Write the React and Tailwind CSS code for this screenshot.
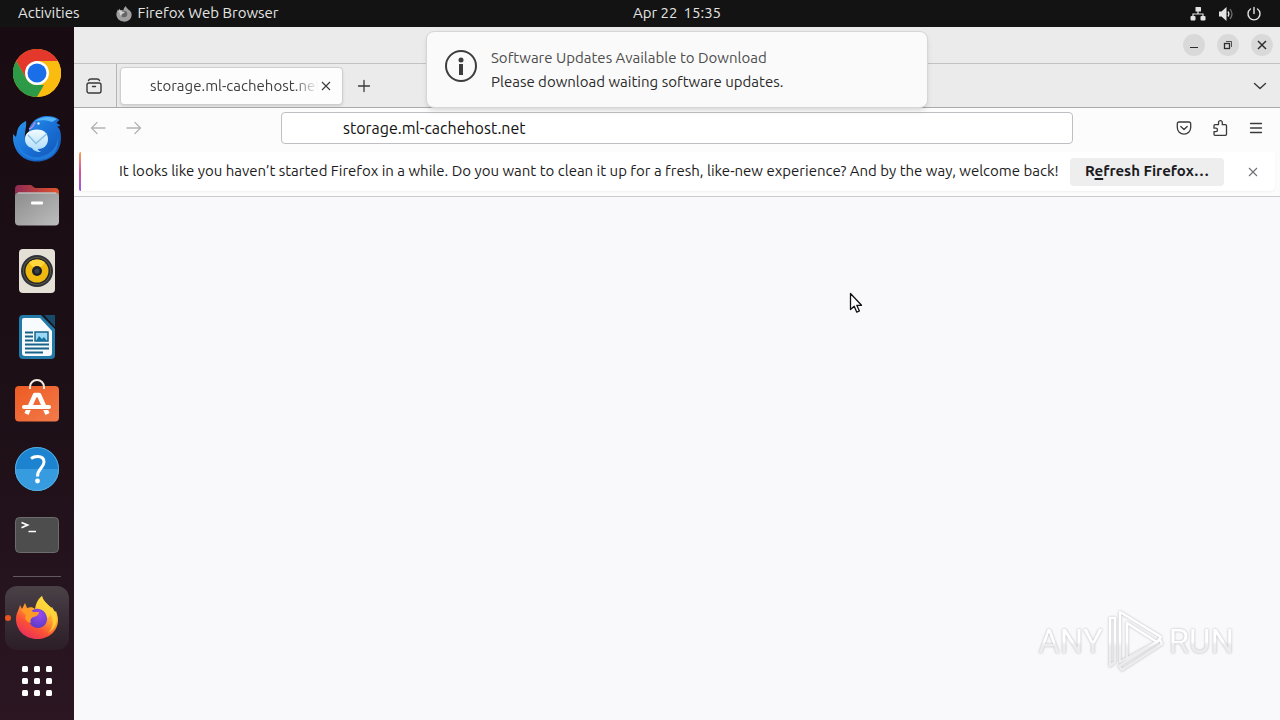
import React from 'react';

function ChromeIcon() {
  return (
    <svg width="48" height="48" viewBox="0 0 48 48" aria-hidden="true">
      <circle cx="24" cy="24" r="24" fill="#f9bb0d" />
      <path d="M24 24 13.6 30 3.2 12A24 24 0 0 1 44.8 12H24Z" fill="#e3382b" />
      <path d="M3.2 12 13.6 30A12 12 0 0 0 24 36h10.4L24 48A24 24 0 0 1 3.2 12Z" fill="#2c9a47" />
      <path d="M34.4 30 24 48A24 24 0 0 0 44.8 12H24a12 12 0 0 1 10.4 18Z" fill="#fbbc10" />
      <circle cx="24" cy="24" r="12" fill="#fff" />
      <circle cx="24" cy="24" r="9.5" fill="#1a6fe8" />
    </svg>
  );
}

function ThunderbirdIcon() {
  return (
    <svg width="48" height="48" viewBox="0 0 48 48" aria-hidden="true">
      <defs>
        <linearGradient id="bird" x1="0" y1="0" x2="1" y2="1">
          <stop offset="0" stopColor="#2d9bf0" />
          <stop offset="0.5" stopColor="#1a72d8" />
          <stop offset="1" stopColor="#1152b0" />
        </linearGradient>
        <linearGradient id="birdmail" x1="0" y1="0" x2="0" y2="1">
          <stop offset="0" stopColor="#f2faff" />
          <stop offset="1" stopColor="#a9dcfb" />
        </linearGradient>
      </defs>
      <path d="M0 19C-1 34 8 46.500 24 46.500 38 46.500 48 37 48 23c0-4-.6-7-1.600-9l-2-2.500 3-.5c-1-1.400-2-2-4-3l3-3C41 0 27-1 20 7c-3 3-4 6-4 9l-4 8c-1-6 2-12 1-18-4 2-8 5-9 11l-1 5C2 21 1 20 0 19Z" fill="url(#bird)" />
      <path d="M4 24c1 11 9 18 19 18 12 0 21-8 22-20 2 14-7 23-20 23C12 45 4 36 4 24Z" fill="#2486e4" opacity=".7" />
      <path d="M22 6c7-5 16-5 22-2l-5 3c-5-2-11-2-17-1Z" fill="#57b5fa" />
      <path d="M12 24c0-6 5-9.500 12-9.500 6 0 11 3 11 9.500 0 7-5 10-10 10 0 2 2 2 3 3-5 0-8-2-9-4-4-1-7-4-7-9Z" fill="url(#birdmail)" />
      <path d="m15 20 8 8.500 11-10" fill="none" stroke="#86bedf" strokeWidth="1.300" />
      <path d="M16 14c3-1 5-4 6-7" fill="none" stroke="#b58be6" strokeWidth="1.500" />
      <circle cx="25.500" cy="8.500" r="1.200" fill="#d9f1ff" />
    </svg>
  );
}

function FilesIcon() {
  return (
    <svg width="48" height="48" viewBox="0 0 48 48" aria-hidden="true">
      <defs>
        <linearGradient id="folderback" x1="0" x2="1">
          <stop offset="0" stopColor="#8f2a53" />
          <stop offset="1" stopColor="#e0542c" />
        </linearGradient>
        <linearGradient id="folderfront" x1="0" y1="0" x2="1" y2="1">
          <stop offset="0" stopColor="#8c8c8c" />
          <stop offset="1" stopColor="#bdbdbd" />
        </linearGradient>
      </defs>
      <path d="M2 8a4 4 0 0 1 4-4h12l4 3h20a4 4 0 0 1 4 4v10H2Z" fill="url(#folderback)" />
      <rect x="2" y="11.500" width="44" height="33" rx="4" fill="url(#folderfront)" />
      <path d="M5 12h38" stroke="#cfcfcf" strokeWidth="1" />
      <rect x="18" y="20.500" width="12" height="3" rx="1" fill="#fff" />
    </svg>
  );
}

function RhythmboxIcon() {
  return (
    <svg width="48" height="48" viewBox="0 0 48 48" aria-hidden="true">
      <rect x="6" y="2" width="36" height="44" rx="4" fill="#e4e0d6" />
      <circle cx="24" cy="24" r="16" fill="#2e3138" />
      <circle cx="24" cy="24" r="14" fill="#5d5845" />
      <circle cx="24" cy="24" r="13" fill="#23262c" />
      <circle cx="24" cy="24" r="11.500" fill="#f0b90f" />
      <path d="M24 24 16 15.700a11.500 11.500 0 0 1 16 0Z" fill="#ffd63c" />
      <circle cx="24" cy="24" r="5" fill="#1c1f26" />
      <circle cx="24" cy="24" r="2.500" fill="#39414c" />
    </svg>
  );
}

function WriterIcon() {
  return (
    <svg width="48" height="48" viewBox="0 0 48 48" aria-hidden="true">
      <path d="M10 2h18l14 14v26a4 4 0 0 1-4 4H10a4 4 0 0 1-4-4V6a4 4 0 0 1 4-4Z" fill="#217aa8" />
      <path d="M31 2h11v12Z" fill="#164b6c" />
      <path d="M11 5h16l12 13v22a3 3 0 0 1-3 3H12a3 3 0 0 1-3-3V7a2 2 0 0 1 2-2Z" fill="#f7fbfd" />
      <path d="M12 19.500h8M12 23.500h8M12 27.500h8M12 31.500h24M12 35.500h24M12 39.500h18" stroke="#176389" strokeWidth="2" />
      <rect x="22" y="19" width="13" height="9" fill="#9bd8f5" stroke="#176389" strokeWidth="1.500" />
      <path d="m23 28 3-5 3 3 2-2 3 4Z" fill="#14749f" />
    </svg>
  );
}

function SoftwareIcon() {
  return (
    <svg width="48" height="48" viewBox="0 0 48 48" aria-hidden="true">
      <defs>
        <linearGradient id="bag" x1="0" y1="0" x2="1" y2="1">
          <stop offset="0" stopColor="#ed5a23" />
          <stop offset="1" stopColor="#f27b4a" />
        </linearGradient>
      </defs>
      <rect x="2" y="7" width="44" height="35.500" rx="4" fill="url(#bag)" />
      <path d="M17 10V8a7 7 0 0 1 14 0v2" fill="none" stroke="#f5e8dc" strokeWidth="2" />
      <path d="m13.500 35 8.500-19h4l8.500 19" fill="none" stroke="#fff" strokeWidth="4.500" strokeLinejoin="round" />
      <rect x="9" y="26" width="29" height="4" rx="2" fill="#fff" />
      <path d="M11 30.500h26" stroke="#ec6534" strokeWidth="1" />
    </svg>
  );
}

function HelpIcon() {
  return (
    <svg width="48" height="48" viewBox="0 0 48 48" aria-hidden="true">
      <circle cx="24" cy="24" r="22" fill="#1c83d0" />
      <path d="M2 24a22 22 0 0 0 44 0Z" fill="#379be0" />
      <circle cx="24" cy="24" r="21.500" fill="none" stroke="#56adde" strokeWidth="1" />
      <path d="M18 13.500c2-1.500 4-2 6.500-2 4 0 6.500 2 6.500 5.500 0 6-6.500 6.500-6.500 14.500" fill="none" stroke="#fff" strokeWidth="3" />
      <circle cx="24.500" cy="36" r="2.400" fill="#fff" />
    </svg>
  );
}

function TerminalIcon() {
  return (
    <svg width="48" height="48" viewBox="0 0 48 48" aria-hidden="true">
      <rect x="2.500" y="6.500" width="43" height="35" rx="4" fill="#4d4d4d" stroke="#6c6c6c" />
      <path d="m8.500 11.500 6 2.500-6 2.800" fill="none" stroke="#fff" strokeWidth="1.800" />
      <path d="M15.500 20.500h7.500" stroke="#fff" strokeWidth="1.500" />
    </svg>
  );
}

function FirefoxIcon() {
  return (
    <svg width="44" height="44" viewBox="0 0 44 44" aria-hidden="true">
      <defs>
        <linearGradient id="fox" x1="0.800" y1="0" x2="0.200" y2="1">
          <stop offset="0" stopColor="#fff04a" />
          <stop offset="0.400" stopColor="#ffa52b" />
          <stop offset="0.700" stopColor="#fb4f36" />
          <stop offset="1" stopColor="#e62a63" />
        </linearGradient>
        <radialGradient id="globe" cx="0.600" cy="0.300" r="0.800">
          <stop offset="0" stopColor="#9b4be8" />
          <stop offset="1" stopColor="#5339c5" />
        </radialGradient>
      </defs>
      <path d="M27 0c1 5 6 8 9 12l1-1c1 2 2 3 3 5l1-1c1 3 2 6 2 9 0 11-9 19-21 19S1 34 1 23c0-6 3-9 4-14l2 4 3-6 2 5c3-1 6-1 8 1 1-6 3-10 7-13Z" fill="url(#fox)" />
      <path d="M27 0c-4 4-6 8-6 13 5 0 10 4 11 9 3-1 3-3 3-5 4 6 4 15-2 20 8-4 11-14 7-21-3-6-12-9-13-16Z" fill="#ffd83a" opacity=".8" />
      <path d="M13 20c2-5 6-8 11-7 5 1 8 5 8 10s-4 9-9 9-9-4-9-8Z" fill="url(#globe)" />
      <path d="M6 13c5-2 10 0 12 3h6c0 3-4 5-6 5-3 2-3 4-2 6-5-1-7-5-5-8-2-1-4-4-5-6Z" fill="#ff9a26" />
    </svg>
  );
}

function MonoFirefoxIcon() {
  return (
    <svg width="16" height="16" viewBox="0 0 44 44" aria-hidden="true">
      <path d="M27 0c1 5 6 8 9 12l1-1c1 2 2 3 3 5l1-1c1 3 2 6 2 9 0 11-9 19-21 19S1 34 1 23c0-6 3-9 4-14l2 4 3-6 2 5c3-1 6-1 8 1 1-6 3-10 7-13Z" fill="#a0a0a0" />
      <circle cx="22" cy="22" r="9" fill="#666" />
      <path d="M6 13c5-2 10 0 12 3h6c0 3-4 5-6 5-3 2-3 4-2 6-5-1-7-5-5-8-2-1-4-4-5-6Z" fill="#d0d0d0" />
    </svg>
  );
}

function GridIcon() {
  return (
    <svg width="32" height="32" viewBox="0 0 32 32" fill="#fff" aria-hidden="true">
      {[1, 13, 25].map((y) => [1, 13, 25].map((x) => <rect key={x + '-' + y} x={x} y={y} width="6" height="6" rx="1.500" />))}
    </svg>
  );
}

function CloseGlyph({ size = 10, width = 1.1 }) {
  return (
    <svg width={size} height={size} viewBox="0 0 10 10" fill="none" stroke="currentColor" strokeWidth={width} aria-hidden="true">
      <path d="m1 1 8 8M9 1 1 9" />
    </svg>
  );
}

const stroke = { fill: 'none', stroke: 'currentColor', strokeLinecap: 'round', strokeLinejoin: 'round', 'aria-hidden': true };

const apps = [
  ['Google Chrome', ChromeIcon],
  ['Thunderbird Mail', ThunderbirdIcon],
  ['Files', FilesIcon],
  ['Rhythmbox', RhythmboxIcon],
  ['LibreOffice Writer', WriterIcon],
  ['Ubuntu Software', SoftwareIcon],
  ['Help', HelpIcon],
  ['Terminal', TerminalIcon],
];

function TopBar() {
  return (
    <header className="grid h-[27px] shrink-0 grid-cols-[74px_1fr_auto_1fr] items-center bg-[#131313] text-[15px] text-[#e4e4e4]">
      <div className="col-span-2 flex items-center gap-9 pl-[18px]">
        <button type="button">Activities</button>
        <button type="button" className="flex items-center gap-1.5">
          <MonoFirefoxIcon />
          Firefox Web Browser
        </button>
      </div>
      <button type="button" className="flex gap-1.5">
        <span>Apr 22</span>
        <span>15:35</span>
      </button>
      <button type="button" aria-label="System menu" className="flex items-center gap-3 justify-self-end pr-[18px]">
        <svg width="16" height="16" viewBox="0 0 16 16" fill="currentColor" aria-hidden="true">
          <rect x="5.500" y="1" width="5.500" height="4.500" rx=".5" />
          <rect x="0.500" y="10" width="5" height="4.500" rx="1" />
          <rect x="10.500" y="10" width="5" height="4.500" rx="1" />
          <path d="M8 5v3M3 10.500V8h10v2.500" fill="none" stroke="currentColor" strokeWidth="1.200" />
        </svg>
        <svg width="16" height="16" viewBox="0 0 16 16" aria-hidden="true">
          <path d="M1 5.500h2.500L8.500 1v14l-5-4.500H1Z" fill="currentColor" />
          <path d="M10 5.500q1.800 2.500 0 5" fill="none" stroke="currentColor" strokeWidth="1.300" />
          <path d="M12 3q4 5 0 10" fill="none" stroke="#777" strokeWidth="1.200" />
        </svg>
        <svg width="16" height="16" viewBox="0 0 16 16" {...stroke} strokeWidth="1.400">
          <path d="M8 1.500v6M4.500 3a6 6 0 1 0 7 0" />
        </svg>
      </button>
    </header>
  );
}

function Dock() {
  return (
    <nav aria-label="Dock" className="flex w-[74px] shrink-0 flex-col items-center bg-linear-to-b from-[#190b12] via-[#1c0f16] to-[#2b1622] pt-[13px]">
      {apps.map(([name, Icon]) => (
        <button key={name} type="button" aria-label={name} className="flex h-[66px] w-16 shrink-0 items-center justify-center">
          <Icon />
        </button>
      ))}
      <div className="mt-2 h-px w-12 shrink-0 bg-[#625860]" />
      <button type="button" aria-label="Firefox" className="relative mt-[9px] flex h-16 w-16 shrink-0 items-center justify-center rounded-xl bg-linear-to-b from-[#4a4147] to-[#2c1d27]">
        <span className="absolute left-0 h-1.5 w-1.5 rounded-full bg-[#e95420]" />
        <FirefoxIcon />
      </button>
      <button type="button" aria-label="Show applications" className="flex h-[62px] w-16 shrink-0 items-center justify-center">
        <GridIcon />
      </button>
    </nav>
  );
}

function TitleBar() {
  const circle = 'flex h-[22px] w-[22px] items-center justify-center rounded-full bg-[#d9d9d9]';
  return (
    <div className="flex h-[37px] shrink-0 items-center justify-end gap-3 border-b border-[#c2c2c2] bg-[#ebebeb] pr-[7px] text-[#2e2e2e]">
      <button type="button" aria-label="Minimize" className={circle}>
        <svg width="10" height="10" viewBox="0 0 10 10" aria-hidden="true"><path d="M1 7.500h8" stroke="currentColor" /></svg>
      </button>
      <button type="button" aria-label="Restore" className={circle}>
        <svg width="10" height="10" viewBox="0 0 10 10" fill="none" stroke="currentColor" aria-hidden="true">
          <rect x="1.500" y="3.500" width="5" height="5" strokeWidth="1.300" />
          <path d="M3 1.500h5.500V7" strokeWidth=".8" />
        </svg>
      </button>
      <button type="button" aria-label="Close window" className={circle}><CloseGlyph width={1.5} /></button>
    </div>
  );
}

function TabStrip() {
  return (
    <div className="flex h-11 shrink-0 items-stretch border-b border-[#a9a9a9] bg-[#ebebeb] text-[#3a3a3a]">
      <button type="button" aria-label="Firefox View" className="flex w-[43px] items-center justify-center border-r border-[#b5b5b5] pr-0.5">
        <svg width="16" height="16" viewBox="0 0 16 16" {...stroke} strokeWidth="1.400">
          <rect x="1" y="5" width="14" height="10" rx="2" />
          <path d="M2.500 2.500Q3 1 5 1h6q2 0 2.500 1.500M6.500 8.500h3" />
        </svg>
      </button>
      <div className="mt-[3px] mb-0.5 ml-[3px] flex w-[223px] items-center rounded border border-[#cfcfcf] bg-[#fdfdfd] pl-[29px] shadow">
        <button type="button" className="w-[168px] overflow-hidden text-left text-[15px] whitespace-nowrap text-[#3e3e3e] mask-r-from-85% mask-r-to-100%">
          storage.ml-cachehost.net
        </button>
        <button type="button" aria-label="Close tab" className="flex h-4 w-4 items-center justify-center"><CloseGlyph /></button>
      </div>
      <button type="button" aria-label="New tab" className="flex w-[42px] items-center justify-center">
        <svg width="14" height="14" viewBox="0 0 14 14" {...stroke} strokeWidth="1.300"><path d="M7 1.500v11M1.500 7h11" /></svg>
      </button>
      <button type="button" aria-label="List all tabs" className="ml-auto flex w-10 items-center justify-center">
        <svg width="14" height="14" viewBox="0 0 14 14" {...stroke} strokeWidth="1.400"><path d="m1.500 4.500 5.500 5 5.500-5" /></svg>
      </button>
    </div>
  );
}

function Toolbar() {
  const tool = 'flex h-8 w-9 items-center justify-center';
  return (
    <div className="grid h-11 shrink-0 grid-cols-[1fr_minmax(0,792px)_1fr] items-start px-1.5 pt-1">
      <div className="flex text-[#b3b3b3]">
        <button type="button" aria-label="Back" className={tool}>
          <svg width="16" height="16" viewBox="0 0 16 16" {...stroke} strokeWidth="1.300"><path d="M15 8H1.500M7 2.500 1.500 8 7 13.500" /></svg>
        </button>
        <button type="button" aria-label="Forward" className={tool}>
          <svg width="16" height="16" viewBox="0 0 16 16" {...stroke} strokeWidth="1.300"><path d="M1 8h13.500M9 2.500 14.500 8 9 13.500" /></svg>
        </button>
      </div>
      <input aria-label="Address" type="text" defaultValue="storage.ml-cachehost.net" className="h-8 w-full rounded border border-[#bfbfc3] bg-white pl-[61px] text-base text-[#111] outline-none" />
      <div className="flex justify-end text-[#3a3a3a]">
        <button type="button" aria-label="Save to Pocket" className={tool}>
          <svg width="16" height="16" viewBox="0 0 16 16" {...stroke} strokeWidth="1.300">
            <path d="M3 2h10a1.700 1.700 0 0 1 1.700 1.700V7.500a6.700 6.700 0 0 1-13.400 0V3.700A1.700 1.700 0 0 1 3 2Z" />
            <path d="m4.800 6.500 3.200 3 3.200-3" />
          </svg>
        </button>
        <button type="button" aria-label="Extensions" className={tool}>
          <svg width="16" height="16" viewBox="0 0 16 16" {...stroke} strokeWidth="1.300">
            <path d="M3 15.300h10.500a1 1 0 0 0 1-1V5.700a1 1 0 0 0-1-1H10.300V2.600a1.900 1.900 0 0 0-3.800 0v2.100H3a1 1 0 0 0-1 1v2.500h1.800a1.700 1.700 0 0 1 0 3.400H2v2.700a1 1 0 0 0 1 1Z" />
          </svg>
        </button>
        <button type="button" aria-label="Open application menu" className={tool}>
          <svg width="14" height="14" viewBox="0 0 14 14" {...stroke} strokeWidth="1.300"><path d="M1.500 2.500h11M1.500 7h11M1.500 11.500h11" /></svg>
        </button>
      </div>
    </div>
  );
}

function RefreshBar() {
  return (
    <div className="shrink-0 border-b border-[#cacace] px-[5px] pb-[5px]">
      <div role="status" className="flex h-[39px] items-center rounded-sm bg-white pr-[14px] text-[15px] text-[#1c1b22] shadow-xs">
        <div className="h-full w-0.5 shrink-0 rounded-l bg-linear-to-b from-[#f7a04b] via-[#d4509a] to-[#9059e6]" />
        <p className="min-w-0 flex-1 truncate pl-[38px]">
          It looks like you haven’t started Firefox in a while. Do you want to clean it up for a fresh, like-new experience? And by the way, welcome back!
        </p>
        <button type="button" className="h-7 w-[154px] shrink-0 rounded bg-[#eeeeef] font-bold">
          R<span className="underline decoration-2 underline-offset-2">e</span>fresh Firefox…
        </button>
        <button type="button" aria-label="Dismiss" className="ml-[21px] flex h-4 w-4 items-center justify-center text-[#707074]"><CloseGlyph /></button>
      </div>
    </div>
  );
}

function UpdateNotice() {
  return (
    <aside className="absolute inset-x-0 top-1 mx-auto flex h-[77px] w-[502px] gap-[13px] rounded-lg border border-[#d6d6d6] bg-[#fafafa] px-[17px] shadow-md">
      <svg className="mt-[17px] shrink-0" width="34" height="34" viewBox="0 0 34 34" aria-hidden="true">
        <circle cx="17" cy="17" r="15" fill="none" stroke="#3d3d3d" strokeWidth="2" />
        <circle cx="17" cy="11" r="2.500" fill="#3d3d3d" />
        <path d="M17 15v11" stroke="#3d3d3d" strokeWidth="4" />
      </svg>
      <div className="pt-[14px] text-[15px] leading-6 text-[#2b2b2b]">
        <h2 className="text-[#4d4d4d]">Software Updates Available to Download</h2>
        <p>Please download waiting software updates.</p>
      </div>
    </aside>
  );
}

function Watermark() {
  return (
    <div className="absolute right-[46px] bottom-[46px] flex items-center gap-1 font-['Liberation_Sans_Narrow','Roboto',sans-serif] text-[33px] leading-none drop-shadow-[0_0_1px_#b4b4ba]">
      <span className="bg-linear-to-b from-white from-50% to-[#ededf0] to-60% bg-clip-text text-transparent">ANY</span>
      <svg width="58" height="66" viewBox="0 0 58 66" fill="none" strokeWidth="2.500" strokeLinejoin="round" strokeLinecap="round" aria-hidden="true">
        <defs>
          <linearGradient id="mark" gradientUnits="userSpaceOnUse" x1="0" y1="0" x2="0" y2="66">
            <stop offset="0.500" stopColor="#fff" />
            <stop offset="0.600" stopColor="#ededf0" />
          </linearGradient>
        </defs>
        <path d="M8 10H3v48l5-4V10M13 54V4l41 25-4 5-30-19v35" stroke="url(#mark)" />
        <path d="m13 54 40-22 2 4-40 26-3-4 38-24" stroke="url(#mark)" />
      </svg>
      <span className="bg-linear-to-b from-white from-50% to-[#ededf0] to-60% bg-clip-text text-transparent">RUN</span>
    </div>
  );
}

export default function App() {
  return (
    <div className="flex h-screen flex-col overflow-hidden font-['Ubuntu','Noto_Sans',sans-serif]">
      <TopBar />
      <div className="flex min-h-0 flex-1">
        <Dock />
        <section aria-label="Firefox" className="relative flex min-w-0 flex-1 flex-col bg-[#fcfcfc]">
          <TitleBar />
          <TabStrip />
          <Toolbar />
          <RefreshBar />
          <main className="relative flex-1 bg-[#f9f9fc]">
            <Watermark />
          </main>
          <UpdateNotice />
          <svg className="absolute top-[265px] left-[775px]" width="14" height="22" viewBox="0 0 14 22" aria-hidden="true">
            <path d="M1.500 1.500v16l3.700-3.300 2.600 6 2.600-1.200-2.600-5.700h4.700Z" fill="#fff" stroke="#111" strokeWidth="1.300" strokeLinejoin="round" />
          </svg>
        </section>
      </div>
    </div>
  );
}
